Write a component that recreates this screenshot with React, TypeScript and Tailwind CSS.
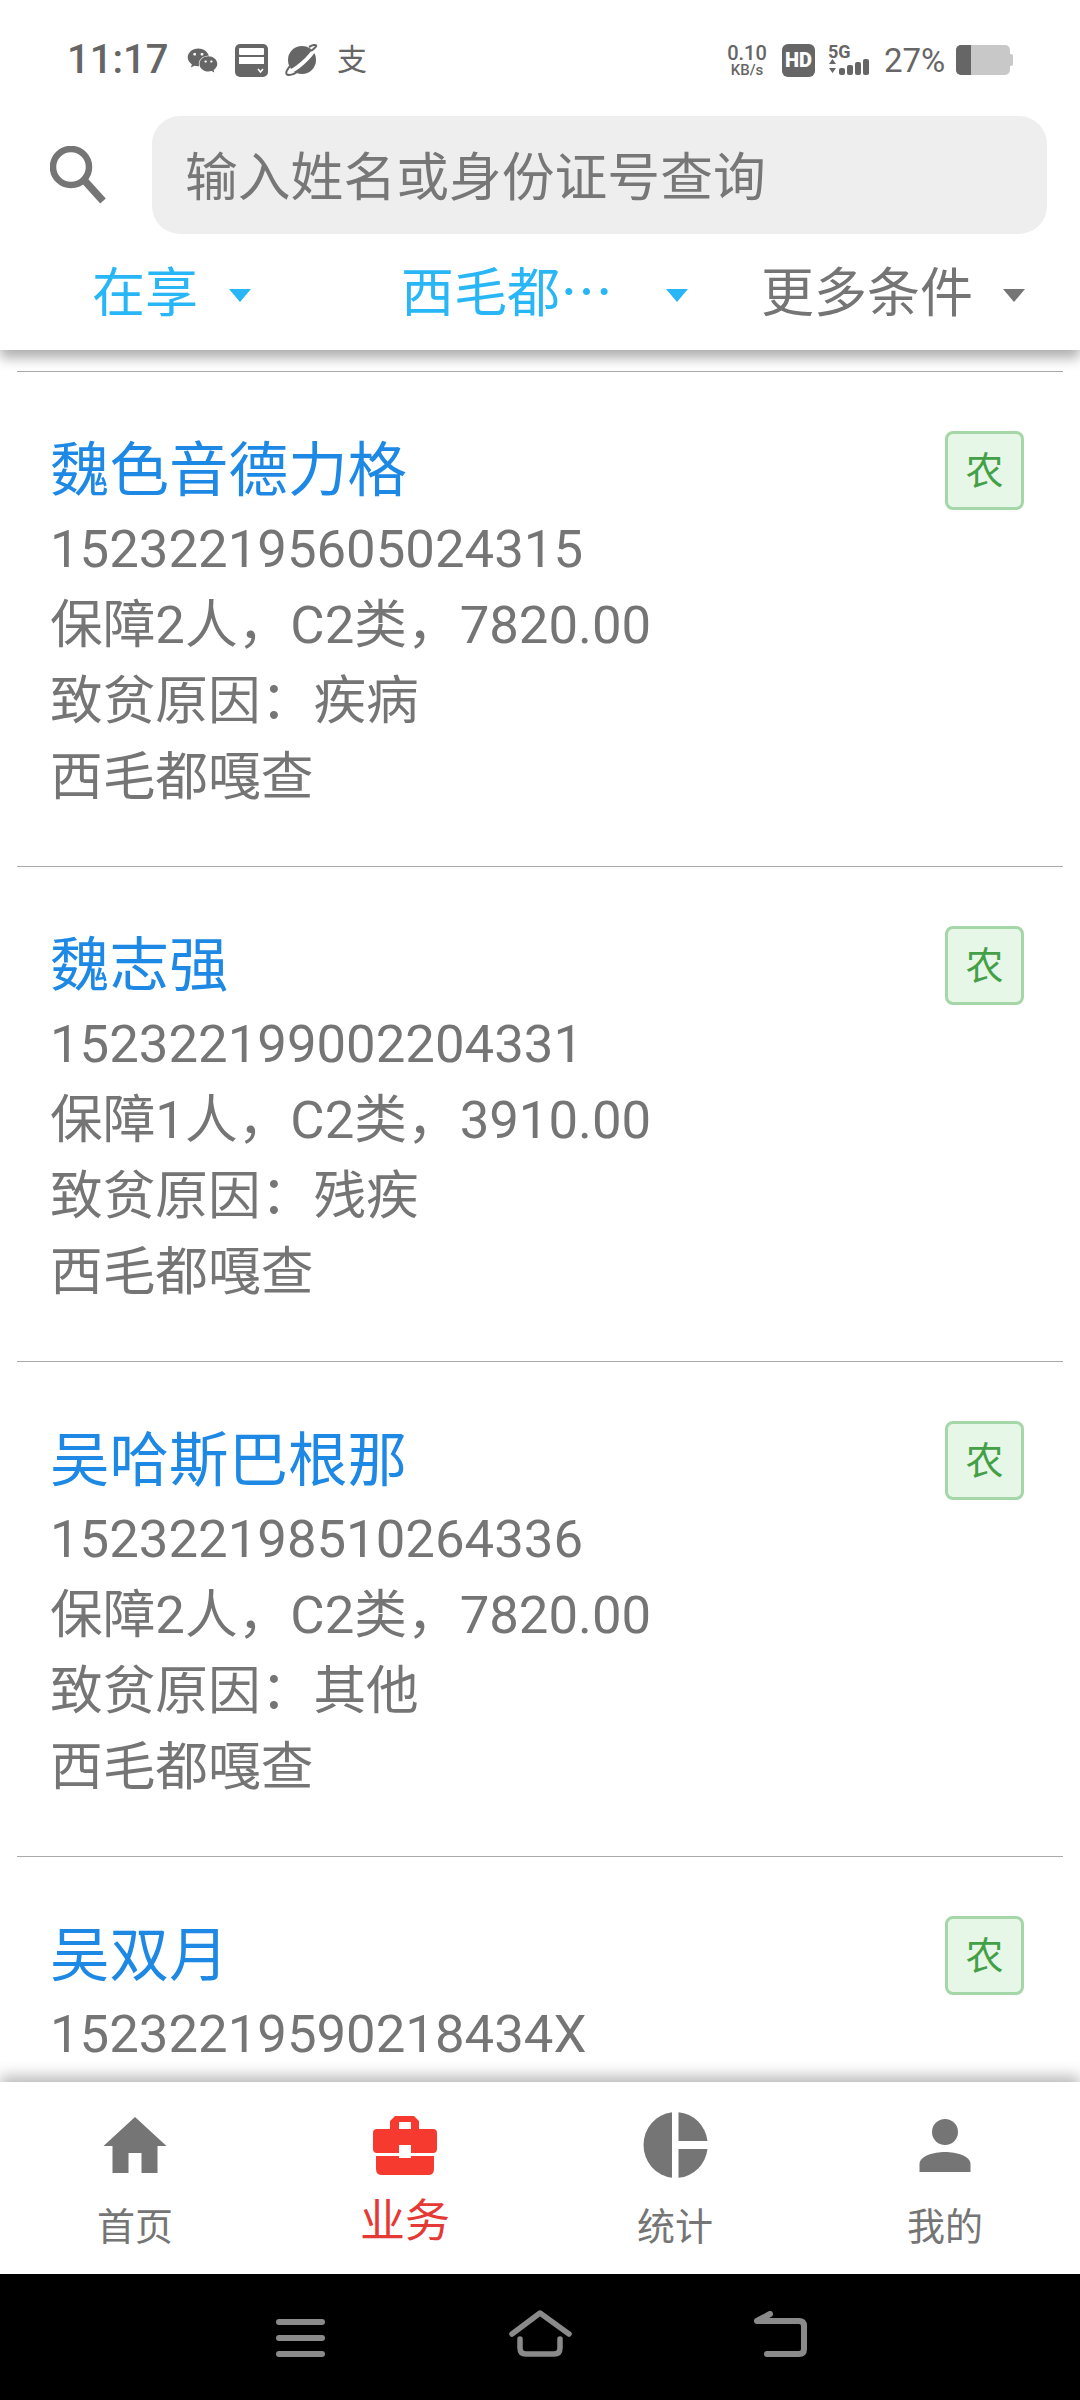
import React from 'react';
import { FaWeixin } from 'react-icons/fa';

type Person = { name: string; id: string; aid?: string; reason?: string; place?: string };

const people: Person[] = [
  { name: '魏色音德力格', id: '152322195605024315', aid: '保障2人，C2类，7820.00', reason: '致贫原因：疾病', place: '西毛都嘎查' },
  { name: '魏志强', id: '152322199002204331', aid: '保障1人，C2类，3910.00', reason: '致贫原因：残疾', place: '西毛都嘎查' },
  { name: '吴哈斯巴根那', id: '152322198510264336', aid: '保障2人，C2类，7820.00', reason: '致贫原因：其他', place: '西毛都嘎查' },
  // the rest of this row is hidden under the bottom bar
  { name: '吴双月', id: '15232219590218434X' },
];

const Caret = ({ className }: { className: string }) => (
  <svg width="22" height="13" viewBox="0 0 22 13" className={className}>
    <path d="M0 0H22L11 13Z" fill="currentColor" />
  </svg>
);

const StatusBar = () => (
  <div className="flex h-[116px] items-center pl-[67px] pr-[67px] pt-[4px] text-[#666666]">
    <span className="w-[103px] text-[40px] leading-none font-medium">11:17</span>
    <FaWeixin className="ml-[17px] h-[31px] w-[31px]" />
    {/* card icon */}
    <svg width="33" height="33" viewBox="0 0 33 33" className="ml-[17px]">
      <rect width="33" height="33" rx="5" fill="#666666" />
      <rect x="4" y="4" width="25" height="7" rx="1" fill="#ffffff" />
      <rect x="4" y="13" width="25" height="7" fill="#ffffff" />
      <path d="M23 25l2.500 3 2.500-3" stroke="#ffffff" strokeWidth="1.500" fill="none" />
    </svg>
    {/* planet icon */}
    <svg width="33" height="32" viewBox="0 0 33 32" className="ml-[17px]">
      <circle cx="17" cy="16" r="14" fill="#666666" />
      <path d="M3 28C10 27 26 13 30 4" stroke="#ffffff" strokeWidth="4" fill="none" />
      <path d="M7 20C2 25 0 29 2 30.500C5 32 11 29 15 26" stroke="#666666" strokeWidth="2" fill="none" />
      <path d="M26 7C30 4 33 1 30 1C28 0.500 26 2 24 3" stroke="#666666" strokeWidth="2" fill="none" />
    </svg>
    <span className="ml-[19px] text-[30px] leading-none">支</span>

    <div className="ml-auto flex w-[38px] flex-col items-center">
      <span className="text-[20px] leading-[20px] font-medium">0.10</span>
      <span className="text-[15px] leading-[15px] font-medium">KB/s</span>
    </div>
    <div className="ml-[16px] flex h-[33px] w-[33px] items-center justify-center rounded-[6px] bg-[#666666] text-[20px] leading-none font-black text-white">
      HD
    </div>
    <div className="ml-[13px] flex h-[33px] w-[44px] flex-col">
      <span className="text-[18px] leading-[15px] font-bold">5G</span>
      <div className="flex items-end gap-[2px]">
        <svg width="9" height="16" viewBox="0 0 9 16">
          <path d="M4.500 0L8 5H1ZM1 9H8L4.500 14Z" fill="#666666" />
        </svg>
        <div className="h-[7px] w-[6px] rounded-[2px] bg-[#666666]" />
        <div className="h-[10px] w-[6px] rounded-[2px] bg-[#666666]" />
        <div className="h-[13px] w-[6px] rounded-[2px] bg-[#666666]" />
        <div className="h-[16px] w-[6px] rounded-[2px] bg-[#666666]" />
      </div>
    </div>
    <span className="ml-[12px] w-[60px] text-[33px] leading-none">27%</span>
    <div className="ml-[12px] flex items-center">
      <div className="flex h-[30px] w-[54px] overflow-hidden rounded-[5px] bg-[#c8c8c8]">
        <div className="h-full w-[15px] bg-[#666666]" />
      </div>
      <div className="h-[12px] w-[3px] rounded-r-[2px] bg-[#c8c8c8]" />
    </div>
  </div>
);

const SearchBar = () => (
  <div className="flex h-[118px] items-center pl-[50px] pr-[33px]">
    <svg width="56" height="58" viewBox="0 0 56 58" className="shrink-0">
      <circle cx="21" cy="21" r="18" stroke="#757575" strokeWidth="6.500" fill="none" />
      <path d="M34 34L53 55" stroke="#757575" strokeWidth="7.500" fill="none" />
    </svg>
    <div className="ml-[46px] flex h-full flex-1 items-center rounded-[28px] bg-[#eeeeee] pl-[33px] pt-[6px] text-[52.800px] leading-none text-[#777777]">
      输入姓名或身份证号查询
    </div>
  </div>
);

const Filters = () => (
  <div className="flex h-[116px] items-center pl-[92px] pt-[4px] text-[53px] leading-none">
    <div className="flex w-[309px] items-center text-[#29b6f6]">
      <span>在享</span>
      <Caret className="ml-[31px] mt-[3px]" />
    </div>
    <div className="flex w-[360px] items-center text-[#29b6f6]">
      <span className="w-[265px] whitespace-nowrap">西毛都⋯</span>
      <Caret className="mt-[3px]" />
    </div>
    <div className="flex items-center text-[#757575]">
      <span>更多条件</span>
      <Caret className="ml-[30px] mt-[3px]" />
    </div>
  </div>
);

const PersonRow = ({ person }: { person: Person }) => (
  <div className="flex h-[495px] shrink-0 items-start justify-between border-t border-[#aaaaaa] pl-[33px] pr-[39px] pt-[59px] text-[52.700px] leading-[76px] text-[#757575]">
    <div>
      <div className="text-[59.500px] leading-[80px] text-[#1e88e5]">{person.name}</div>
      <div>{person.id}</div>
      {person.aid && <div>{person.aid}</div>}
      {person.reason && <div>{person.reason}</div>}
      {person.place && <div>{person.place}</div>}
    </div>
    <div className="flex h-[79px] w-[79px] items-center justify-center rounded-[8px] border-[3px] border-[#a5d6a7] bg-[#e6f6e7] text-[38px] leading-none text-[#43a047]">
      农
    </div>
  </div>
);

const navItems = [
  {
    label: '首页',
    icon: (
      <svg width="64" height="56" viewBox="0 0 63 56">
        <path d="M31.500 0L63 29H54V56H38V36H25V56H9V29H0Z" fill="#757575" />
      </svg>
    ),
  },
  {
    label: '业务',
    active: true,
    icon: (
      <svg width="66" height="59" viewBox="0 0 64 59">
        <path
          fillRule="evenodd"
          d="M22 0H41L46 5V13H60Q64 13 64 17V33Q64 37 60 37H38V29H26V37H4Q0 37 0 33V17Q0 13 4 13H17V5ZM26 6V13H38V6Z"
          fill="#f73a30"
        />
        <path d="M3 40H26V42H38V40H61V53Q61 59 55 59H9Q3 59 3 53Z" fill="#f73a30" />
      </svg>
    ),
  },
  {
    label: '统计',
    icon: (
      <svg width="65" height="66" viewBox="0 0 64 66">
        <path d="M28.500 0.200A32 33 0 0 0 28.500 65.800Z" fill="#757575" />
        <path d="M35 0.200A32 33 0 0 1 64 29H35Z" fill="#757575" />
        <path d="M35 65.800A32 33 0 0 0 64 37H35Z" fill="#757575" />
      </svg>
    ),
  },
  {
    label: '我的',
    icon: (
      <svg width="52" height="53" viewBox="0 0 51 53">
        <circle cx="25.500" cy="13" r="13" fill="#757575" />
        <path d="M0 53V45C0 37 14 33 25.500 33S51 37 51 45V53Z" fill="#757575" />
      </svg>
    ),
  },
];

const BottomNav = () => (
  <div className="relative z-10 grid h-[192px] shrink-0 grid-cols-4 bg-white pt-[30px] shadow-[0_-6px_14px_rgba(0,0,0,0.28)]">
    {navItems.map((item) => (
      <div key={item.label} className="flex flex-col items-center">
        <div className="flex h-[66px] items-center">{item.icon}</div>
        {item.active ? (
          <span className="mt-[20px] text-[45px] leading-[48px] text-[#e53935]">{item.label}</span>
        ) : (
          <span className="mt-[25px] text-[38px] leading-[48px] text-[#757575]">{item.label}</span>
        )}
      </div>
    ))}
  </div>
);

const SystemNav = () => (
  <div className="flex h-[126px] shrink-0 items-end justify-center bg-black pl-[2px] pb-[43px]">
    <div className="flex w-[49px] flex-col gap-[10px]">
      <div className="h-[6px] rounded-full bg-[#8a8a8a]" />
      <div className="h-[6px] rounded-full bg-[#8a8a8a]" />
      <div className="h-[6px] rounded-full bg-[#8a8a8a]" />
    </div>
    <svg width="63" height="47" viewBox="0 0 63 47" className="ml-[184px]" fill="none" stroke="#8a8a8a" strokeWidth="5.500" strokeLinecap="round" strokeLinejoin="round">
      <path d="M3 24L31 3L60 24" />
      <path d="M11 29V38Q11 44 17 44H45Q51 44 51 38V29" />
    </svg>
    <svg width="53" height="46" viewBox="0 0 53 46" className="ml-[182px]" fill="none" stroke="#8a8a8a" strokeWidth="6" strokeLinecap="round" strokeLinejoin="round">
      <path d="M16 3L3 10H45Q50 10 50 15V38Q50 43 45 43H13" />
    </svg>
  </div>
);

export default function App() {
  return (
    <div
      className="flex h-[2400px] w-[1080px] flex-col overflow-hidden bg-white"
      style={{ fontFamily: 'Roboto, "Noto Sans CJK SC", sans-serif' }}
    >
      <div className="relative z-10 h-[350px] shrink-0 bg-white shadow-[0_8px_12px_rgba(0,0,0,0.32)]">
        <StatusBar />
        <SearchBar />
        <Filters />
      </div>
      <div className="mx-[17px] flex flex-1 flex-col overflow-hidden pt-[21px]">
        {people.map((person) => (
          <PersonRow key={person.name} person={person} />
        ))}
      </div>
      <BottomNav />
      <SystemNav />
    </div>
  );
}
